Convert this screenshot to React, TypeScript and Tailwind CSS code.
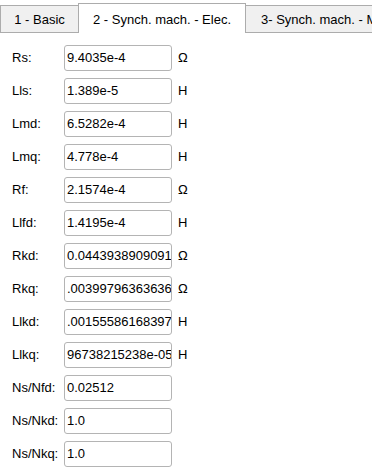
import React from "react";

const rows: [string, string, string][] = [
  ["Rs:", "9.4035e-4", "Ω"],
  ["Lls:", "1.389e-5", "H"],
  ["Lmd:", "6.5282e-4", "H"],
  ["Lmq:", "4.778e-4", "H"],
  ["Rf:", "2.1574e-4", "Ω"],
  ["Llfd:", "1.4195e-4", "H"],
  ["Rkd:", "0.0443938909091", "Ω"],
  ["Rkq:", ".00399796363636", "Ω"],
  ["Llkd:", ".00155586168397", "H"],
  ["Llkq:", "96738215238e-05", "H"],
  ["Ns/Nfd:", "0.02512", ""],
  ["Ns/Nkd:", "1.0", ""],
  ["Ns/Nkq:", "1.0", ""],
];

export default function App() {
  return (
    <div
      className="w-[372px] h-[467px] bg-white overflow-hidden text-[13px] text-black"
      style={{ fontFamily: '"Liberation Sans", Arial, sans-serif' }}
    >
      <div className="flex items-start h-[33px] whitespace-nowrap">
        <div className="mt-[5px] w-[79px] h-[28px] shrink-0 border border-[#acacac] bg-[#f0f0f0] flex items-center justify-center pt-[2px]">
          1 - Basic
        </div>
        <div className="mt-[3px] -ml-px w-[168px] h-[30px] shrink-0 border border-b-0 border-[#acacac] bg-white flex items-center justify-center pt-[2px] relative z-10">
          2 - Synch. mach. - Elec.
        </div>
        <div className="mt-[5px] -ml-px h-[28px] shrink-0 border border-[#acacac] bg-[#f0f0f0] flex items-center pl-[15px] pr-[14px] pt-[2px]">
          3- Synch. mach. - Mech.
        </div>
      </div>
      <div className="flex flex-col gap-[7px] pt-[12px]">
        {rows.map(([l, v, u]) => (
          <div key={l} className="flex items-center h-[26px]">
            <div className="w-[52px] pl-[12px] shrink-0 box-content">{l}</div>
            <div className="w-[108px] h-[26px] shrink-0 border border-[#b4b4b4] rounded-[3px] bg-white flex items-center px-[2px] overflow-hidden whitespace-nowrap">
              {v}
            </div>
            <div className="pl-[6px]">{u}</div>
          </div>
        ))}
      </div>
    </div>
  );
}
